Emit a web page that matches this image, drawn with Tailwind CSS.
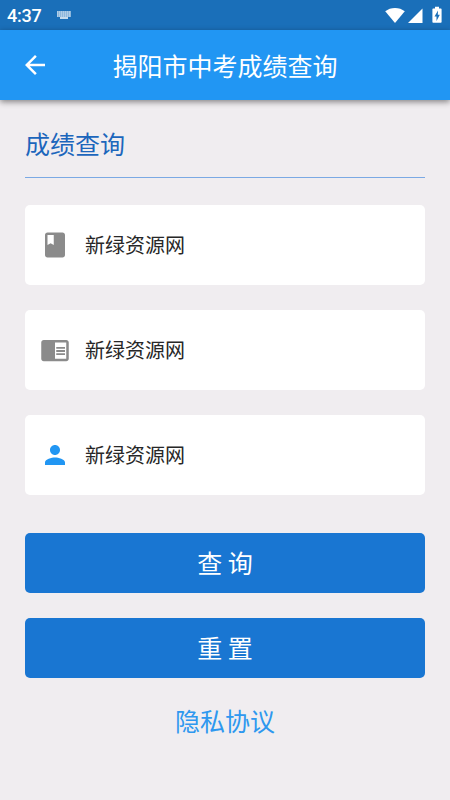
<!DOCTYPE html>
<html lang="zh-CN">
<head>
<meta charset="utf-8">
<meta name="viewport" content="width=device-width, initial-scale=1">
<title>揭阳市中考成绩查询</title>
<script src="https://cdn.jsdelivr.net/npm/@tailwindcss/browser@4"></script>
</head>
<body class="flex h-[800px] w-[450px] flex-col overflow-hidden bg-[#f0edf0] font-['Noto_Sans_CJK_SC',sans-serif]">
  <div class="flex h-[30px] shrink-0 items-center bg-[#1a6fb9] pl-[7px] pr-[8px] text-white">
    <span class="mt-px w-[49px] font-[Roboto,sans-serif] text-[18px] font-medium leading-none tracking-[-0.2px]">4:37</span>
    <svg class="mt-px h-[10px] w-[16px]" viewBox="0 0 16 10">
      <path d="M1 0h14v6H1z" fill="#fff" fill-opacity=".5"/>
      <path d="M1 1h14M1 3h14M1 5h14" stroke="#fff" stroke-opacity=".6" stroke-width="1" stroke-dasharray="1 1"/>
      <path d="M4 6h8v2H4z" fill="#fff" fill-opacity=".75"/>
    </svg>
    <div class="ml-auto flex items-center">
      <svg class="h-[17px] w-[20px]" viewBox="0 0 20 17" fill="#fff"><path d="M10 16L0.2 4.3C2.9 2.200 6.300 1 10 1s7.100 1.200 9.800 3.300z"/></svg>
      <svg class="ml-[3px] h-[17px] w-[15px]" viewBox="0 0 15 17" fill="#fff"><path d="M0 16L14.500 1.500V16z"/></svg>
      <svg class="ml-[9px] h-[18px] w-[10px]" viewBox="0 0 10 18"><path d="M1.200 2.500H3V.7h4v1.800h1.800q.8 0 .8.800V16q0 .8-.8.800H1.200q-.8 0-.8-.8V3.300q0-.8.800-.8z" fill="#fff"/><path d="M6 4.500L2.500 10.500h2V15L7.800 8.800h-2z" fill="#1a6fb9"/></svg>
    </div>
  </div>
  <header class="z-10 grid h-[70px] shrink-0 grid-cols-[70px_1fr_70px] items-center bg-[#2196f3] text-white shadow-[0_2px_6px_rgba(0,0,0,0.45)]">
    <svg class="ml-[20px] size-[30px]" viewBox="0 0 24 24" fill="currentColor"><path d="M20 11H7.830l5.590-5.590L12 4l-8 8 8 8 1.410-1.410L7.830 13H20v-2z"/></svg>
    <h1 class="text-center text-[25px] leading-[36px]">揭阳市中考成绩查询</h1>
  </header>
  <main class="flex flex-col px-[25px] pt-[25px]">
    <h2 class="h-[53px] border-b border-solid border-b-[#7ba9e4] text-[25px] leading-[37px] text-[#1c66bc]">成绩查询</h2>
    <div class="mt-[27px] flex flex-col gap-[25px] text-[20px] text-[#272727]">
      <div class="flex h-[80px] items-center gap-[15px] rounded-[5px] bg-white px-[15px]">
        <svg class="size-[30px]" viewBox="0 0 24 24" fill="#8b8b8b"><path d="M18 2H6c-1.100 0-2 .9-2 2v16c0 1.100.9 2 2 2h12c1.100 0 2-.9 2-2V4c0-1.100-.9-2-2-2zM6 4h5v8l-2.500-1.500L6 12V4z"/></svg>
        <span>新绿资源网</span>
      </div>
      <div class="flex h-[80px] items-center gap-[15px] rounded-[5px] bg-white px-[15px]">
        <svg class="size-[30px]" viewBox="0 0 24 24" fill="#8b8b8b"><path d="M13 12h7v1.500h-7zm0-2.500h7V11h-7zm0 5h7V16h-7zM21 4H3c-1.100 0-2 .9-2 2v13c0 1.100.9 2 2 2h18c1.100 0 2-.9 2-2V6c0-1.100-.9-2-2-2zm0 15h-9V6h9v13z"/></svg>
        <span>新绿资源网</span>
      </div>
      <div class="flex h-[80px] items-center gap-[15px] rounded-[5px] bg-white px-[15px]">
        <svg class="size-[30px]" viewBox="0 0 24 24" fill="#2196f3"><path d="M12 12c2.210 0 4-1.790 4-4s-1.790-4-4-4-4 1.790-4 4 1.790 4 4 4zm0 2c-2.670 0-8 1.340-8 4v2h16v-2c0-2.660-5.330-4-8-4z"/></svg>
        <span>新绿资源网</span>
      </div>
    </div>
    <div class="mt-[37.5px] flex flex-col gap-[25px] text-[25px] text-white">
      <button class="h-[60px] rounded-[5px] bg-[#1976d2] pb-px leading-[37px]">查 询</button>
      <button class="h-[60px] rounded-[5px] bg-[#1976d2] pb-px leading-[37px]">重 置</button>
    </div>
    <a class="mt-[24px] text-center text-[25px] leading-[37px] text-[#2e98ef]">隐私协议</a>
  </main>
</body>
</html>
